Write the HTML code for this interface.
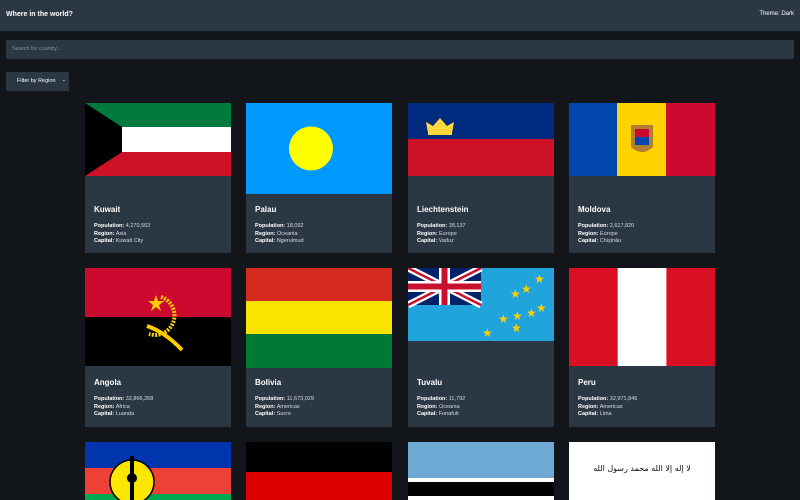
<!DOCTYPE html><html><head><meta charset="utf-8"><style>
*{margin:0;padding:0;box-sizing:border-box}
html,body{width:800px;height:500px;overflow:hidden}
body{background:#121519;font-family:"Liberation Sans",sans-serif;color:#fff;position:relative}
.hdr{position:absolute;left:0;top:0;width:800px;height:31px;background:#2b3743}
.hdr b{position:absolute;left:6px;top:11px;font-size:7px}
.hdr span{position:absolute;right:6px;top:11px;font-size:6px}
.search{position:absolute;left:6px;top:40px;width:788px;height:19px;background:#2b3743;font-size:5.5px;color:#8a939c;padding:6px 0 0 6px}
.filter{position:absolute;left:6px;top:72px;width:63px;height:19px;background:#2b3743;font-size:5.5px;padding:6px 0 0 11px}
.filter i{position:absolute;right:3px;top:5px;font-style:normal;font-size:5px}
.card{position:absolute;width:146px;background:#2b3743;overflow:hidden}
.card svg{display:block}
.nm{position:absolute;left:9px;font-size:8px;font-weight:bold}
.inf{position:absolute;left:9px;font-size:5.5px;line-height:7.6px;color:#d8dde2}
.inf b{color:#fff}
</style></head><body>
<div class="hdr"><b>Where in the world?</b><span>Theme: Dark</span></div>
<div class="search">Search for country...</div>
<div class="filter">Filter by Region<i>⌄</i></div>

<div class="card" style="left:85px;top:103px;height:150px">
<svg width="146" height="73"><rect width="146" height="25" fill="#007a3d"/><rect y="24" width="146" height="25" fill="#fff"/><rect y="49" width="146" height="24" fill="#ce1126"/><polygon points="0,0 37,24 37,49 0,73" fill="#000"/></svg>
<div class="nm" style="top:102px">Kuwait</div><div class="inf" style="top:120px"><b>Population:</b> 4,270,563<br><b>Region:</b> Asia<br><b>Capital:</b> Kuwait City</div></div>

<div class="card" style="left:246px;top:103px;height:150px">
<svg width="146" height="91"><rect width="146" height="91" fill="#0099ff"/><circle cx="65" cy="45.5" r="22" fill="#ffff00"/></svg>
<div class="nm" style="top:102px">Palau</div><div class="inf" style="top:120px"><b>Population:</b> 18,092<br><b>Region:</b> Oceania<br><b>Capital:</b> Ngerulmud</div></div>

<div class="card" style="left:408px;top:103px;height:150px">
<svg width="146" height="73"><rect width="146" height="37" fill="#002b7f"/><rect y="36" width="146" height="37" fill="#ce1126"/><path d="M20 30 L18 19 L25 23 L32 15 L39 23 L46 19 L44 30Z" fill="#ffd83d"/><rect x="20" y="29" width="24" height="3" fill="#ffd83d"/></svg>
<div class="nm" style="top:102px">Liechtenstein</div><div class="inf" style="top:120px"><b>Population:</b> 38,137<br><b>Region:</b> Europe<br><b>Capital:</b> Vaduz</div></div>

<div class="card" style="left:569px;top:103px;height:150px">
<svg width="146" height="73"><rect width="49" height="73" fill="#0046ae"/><rect x="48" width="50" height="73" fill="#ffd200"/><rect x="97" width="49" height="73" fill="#cc092f"/><path d="M62 22 H84 V44 Q73 54 62 44Z" fill="#b07e2e"/><rect x="66" y="26" width="14" height="16" fill="#cc092f"/><rect x="66" y="34" width="14" height="8" fill="#0046ae"/></svg>
<div class="nm" style="top:102px">Moldova</div><div class="inf" style="top:120px"><b>Population:</b> 2,617,820<br><b>Region:</b> Europe<br><b>Capital:</b> Chișinău</div></div>

<div class="card" style="left:85px;top:268px;height:159px">
<svg width="146" height="98"><rect width="146" height="49" fill="#cc092f"/><rect y="49" width="146" height="49" fill="#000"/><path d="M76 29 A17 17 0 1 1 64 66" fill="none" stroke="#ffcb00" stroke-width="4" stroke-dasharray="2 1.3"/><path d="M62 58 Q80 64 97 82" stroke="#ffcb00" stroke-width="4" fill="none"/><polygon points="71,27 73,33 79,33 74,37 76,43 71,39 66,43 68,37 63,33 69,33" fill="#ffcb00"/></svg>
<div class="nm" style="top:110px">Angola</div><div class="inf" style="top:128px"><b>Population:</b> 32,866,268<br><b>Region:</b> Africa<br><b>Capital:</b> Luanda</div></div>

<div class="card" style="left:246px;top:268px;height:159px">
<svg width="146" height="100"><rect width="146" height="34" fill="#d52b1e"/><rect y="33" width="146" height="34" fill="#f9e300"/><rect y="66" width="146" height="34" fill="#007934"/></svg>
<div class="nm" style="top:110px">Bolivia</div><div class="inf" style="top:128px"><b>Population:</b> 11,673,029<br><b>Region:</b> Americas<br><b>Capital:</b> Sucre</div></div>

<div class="card" style="left:408px;top:268px;height:159px">
<svg width="146" height="73"><rect width="146" height="73" fill="#21a3db"/><rect width="73" height="37" fill="#012169"/><path d="M0 0L73 37M73 0L0 37" stroke="#fff" stroke-width="7"/><path d="M0 0L73 37M73 0L0 37" stroke="#c8102e" stroke-width="2.5"/><path d="M36.5 0V37M0 18.5H73" stroke="#fff" stroke-width="11"/><path d="M36.5 0V37M0 18.5H73" stroke="#c8102e" stroke-width="6"/><g fill="#ffce00" font-size="12"><text x="126" y="15">★</text><text x="113" y="25">★</text><text x="102" y="30">★</text><text x="128" y="44">★</text><text x="118" y="49">★</text><text x="104" y="52">★</text><text x="90" y="55">★</text><text x="103" y="64">★</text><text x="74" y="69">★</text></g></svg>
<div class="nm" style="top:110px">Tuvalu</div><div class="inf" style="top:128px"><b>Population:</b> 11,792<br><b>Region:</b> Oceania<br><b>Capital:</b> Funafuti</div></div>

<div class="card" style="left:569px;top:268px;height:159px">
<svg width="146" height="98"><rect width="146" height="98" fill="#d91023"/><rect x="48.7" width="48.7" height="98" fill="#fff"/></svg>
<div class="nm" style="top:110px">Peru</div><div class="inf" style="top:128px"><b>Population:</b> 32,971,846<br><b>Region:</b> Americas<br><b>Capital:</b> Lima</div></div>

<div class="card" style="left:85px;top:442px;height:58px">
<svg width="146" height="58"><rect width="146" height="27" fill="#0035ad"/><rect y="26" width="146" height="27" fill="#ed4135"/><rect y="52" width="146" height="6" fill="#00a850"/><circle cx="47" cy="40" r="22" fill="#fae600" stroke="#000" stroke-width="1.5"/><rect x="45" y="14" width="4" height="44" fill="#000"/><circle cx="47" cy="36" r="5" fill="#000"/></svg></div>

<div class="card" style="left:246px;top:442px;height:58px">
<svg width="146" height="58"><rect width="146" height="30" fill="#000"/><rect y="30" width="146" height="28" fill="#dd0000"/></svg></div>

<div class="card" style="left:408px;top:442px;height:58px">
<svg width="146" height="58"><rect width="146" height="58" fill="#6da9d2"/><rect y="36" width="146" height="22" fill="#fff"/><rect y="40" width="146" height="14" fill="#000"/></svg></div>

<div class="card" style="left:569px;top:442px;height:58px;background:#fff">
<div style="position:absolute;left:23px;top:22px;width:100px;text-align:center;white-space:nowrap;color:#111;font-family:'DejaVu Sans',sans-serif;font-size:8px;letter-spacing:-0.5px;direction:rtl">لا إله إلا الله محمد رسول الله</div></div>
</body></html>
